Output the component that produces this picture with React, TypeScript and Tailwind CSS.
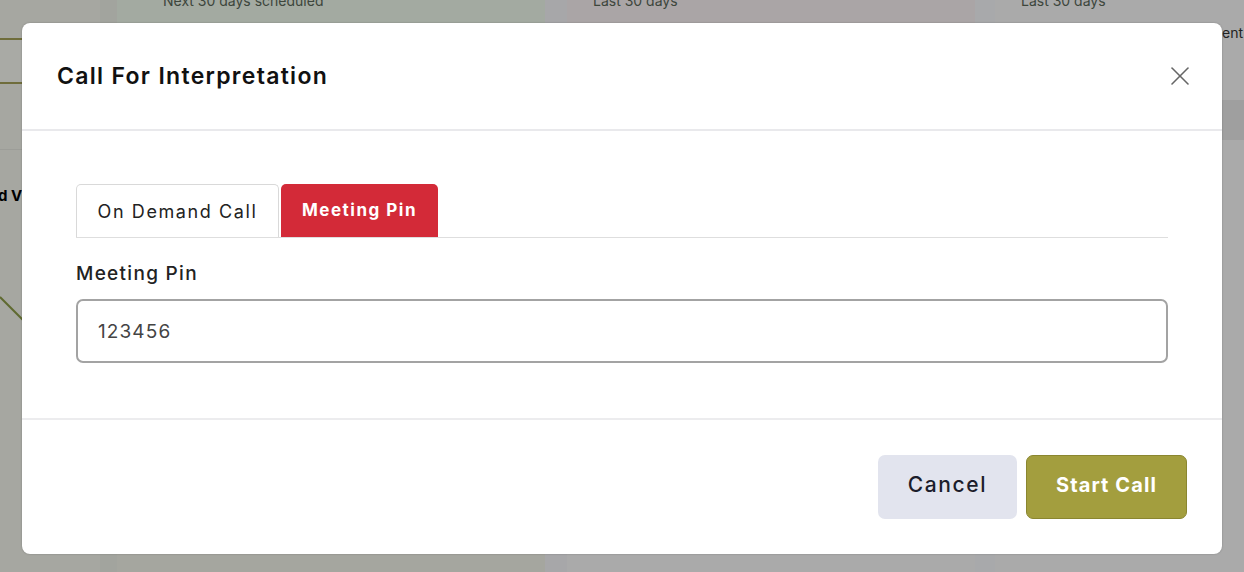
import { X } from "lucide-react"

const font = { fontFamily: "Inter, 'Noto Sans', sans-serif" }

function Backdrop() {
    return (
        <div className="flex h-full w-full text-[14px] text-[#3d463c]">
            {/* left column, mostly covered */}
            <div className="flex w-[100px] flex-col bg-[#a6a7a1]">
                <div className="h-[40px] border-b-2 border-[#6f6d3b]" />
                <div className="h-[44px] border-b-2 border-[#6f6d3b] bg-[#a9aaa5]" />
                <div className="h-[66px] border-b border-[#9c9d98]" />
                <div className="pt-[38px] text-[15px] font-bold leading-none text-black">
                    <span className="-ml-[2px]">d V</span>
                </div>
                <svg className="mt-[82px]" width="100" height="60" viewBox="0 0 100 60">
                    <path d="M0 12 L24 36" stroke="#5f6a30" strokeWidth="2" fill="none" />
                </svg>
            </div>
            <div className="w-[17px] bg-[#a2a49e]" />
            <div className="flex w-[428px] flex-col">
                <div className="h-[34px] bg-[#a3aaa1] pl-[46px] leading-none">
                    <span className="relative -top-[6px]">Next 30 days scheduled</span>
                </div>
                <div className="flex-1 bg-[#a5a69f]" />
            </div>
            <div className="w-[22px] bg-[#a7a7a9]" />
            <div className="flex w-[408px] flex-col">
                <div className="h-[34px] bg-[#aaa5a6] pl-[26px] leading-none">
                    <span className="relative -top-[6px]">Last 30 days</span>
                </div>
                <div className="flex-1 bg-[#aaaaaa]" />
            </div>
            <div className="w-[20px] bg-[#a8a9ab]" />
            <div className="flex flex-1 flex-col bg-[#aaaaaa]">
                <div className="h-[24px] pl-[26px] leading-none">
                    <span className="relative -top-[6px]">Last 30 days</span>
                </div>
                <div className="h-[76px] pl-[227px] pt-[2px] text-[14px] leading-none text-[#222]">ent</div>
                <div className="h-[40px] bg-[#9f9f9f]" />
                <div className="flex-1" />
            </div>
        </div>
    )
}

export default function App() {
    return (
        <div className="relative h-[572px] w-full overflow-hidden" style={font}>
            <Backdrop />

            {/* Modal overlay */}
            <div className="absolute inset-0 px-[22px] pt-[23px]">
                <div className="flex h-[531px] w-[1200px] flex-col rounded-[8px] bg-white shadow-[0_0_2px_rgba(0,0,0,0.25)]">
                    {/* Header */}
                    <div className="flex h-[108px] items-center justify-between border-b-2 border-[#e9e9ec] pl-[35px] pr-[26px]">
                        <h2 className="text-[23px] font-semibold tracking-[1.3px] text-[#111]">
                            Call For Interpretation
                        </h2>
                        <button className="text-[#666]">
                            <X className="h-[32px] w-[32px]" strokeWidth={1.2} />
                        </button>
                    </div>

                    {/* Body */}
                    <div className="border-b-2 border-[#ececee] px-[54px] pb-[55px] pt-[53px]">
                        <div className="flex border-b border-[#dedede]">
                            <button className="h-[53px] w-[203px] rounded-t-[5px] border border-b-0 border-[#d9d9d9] text-[18px] tracking-[1.6px] text-[#222]">
                                On Demand Call
                            </button>
                            <button className="ml-[2px] h-[53px] w-[157px] rounded-t-[5px] bg-[#d32a38] text-[17px] font-bold tracking-[1.5px] text-white">
                                Meeting Pin
                            </button>
                        </div>
                        <label className="mt-[26px] block text-[19px] font-medium leading-none tracking-[1.3px] text-[#222]">
                            Meeting Pin
                        </label>
                        <input
                            defaultValue="123456"
                            className="mt-[16px] h-[64px] w-full rounded-[7px] border-2 border-[#a3a3a3] px-[20px] text-[19px] tracking-[1.1px] text-[#444] outline-none"
                            style={font}
                        />
                    </div>

                    {/* Footer */}
                    <div className="flex flex-1 items-center justify-end gap-[9px] pr-[35px]">
                        <button className="h-[64px] w-[139px] rounded-[7px] bg-[#e2e4ee] pb-[4px] text-[21px] font-medium tracking-[1.6px] text-[#1c1d2b]">
                            Cancel
                        </button>
                        <button className="h-[64px] w-[161px] rounded-[7px] border border-[#8a8630] bg-[#a39e3e] pb-[4px] text-[20px] font-bold tracking-[1.1px] text-white">
                            Start Call
                        </button>
                    </div>
                </div>
            </div>
        </div>
    )
}
